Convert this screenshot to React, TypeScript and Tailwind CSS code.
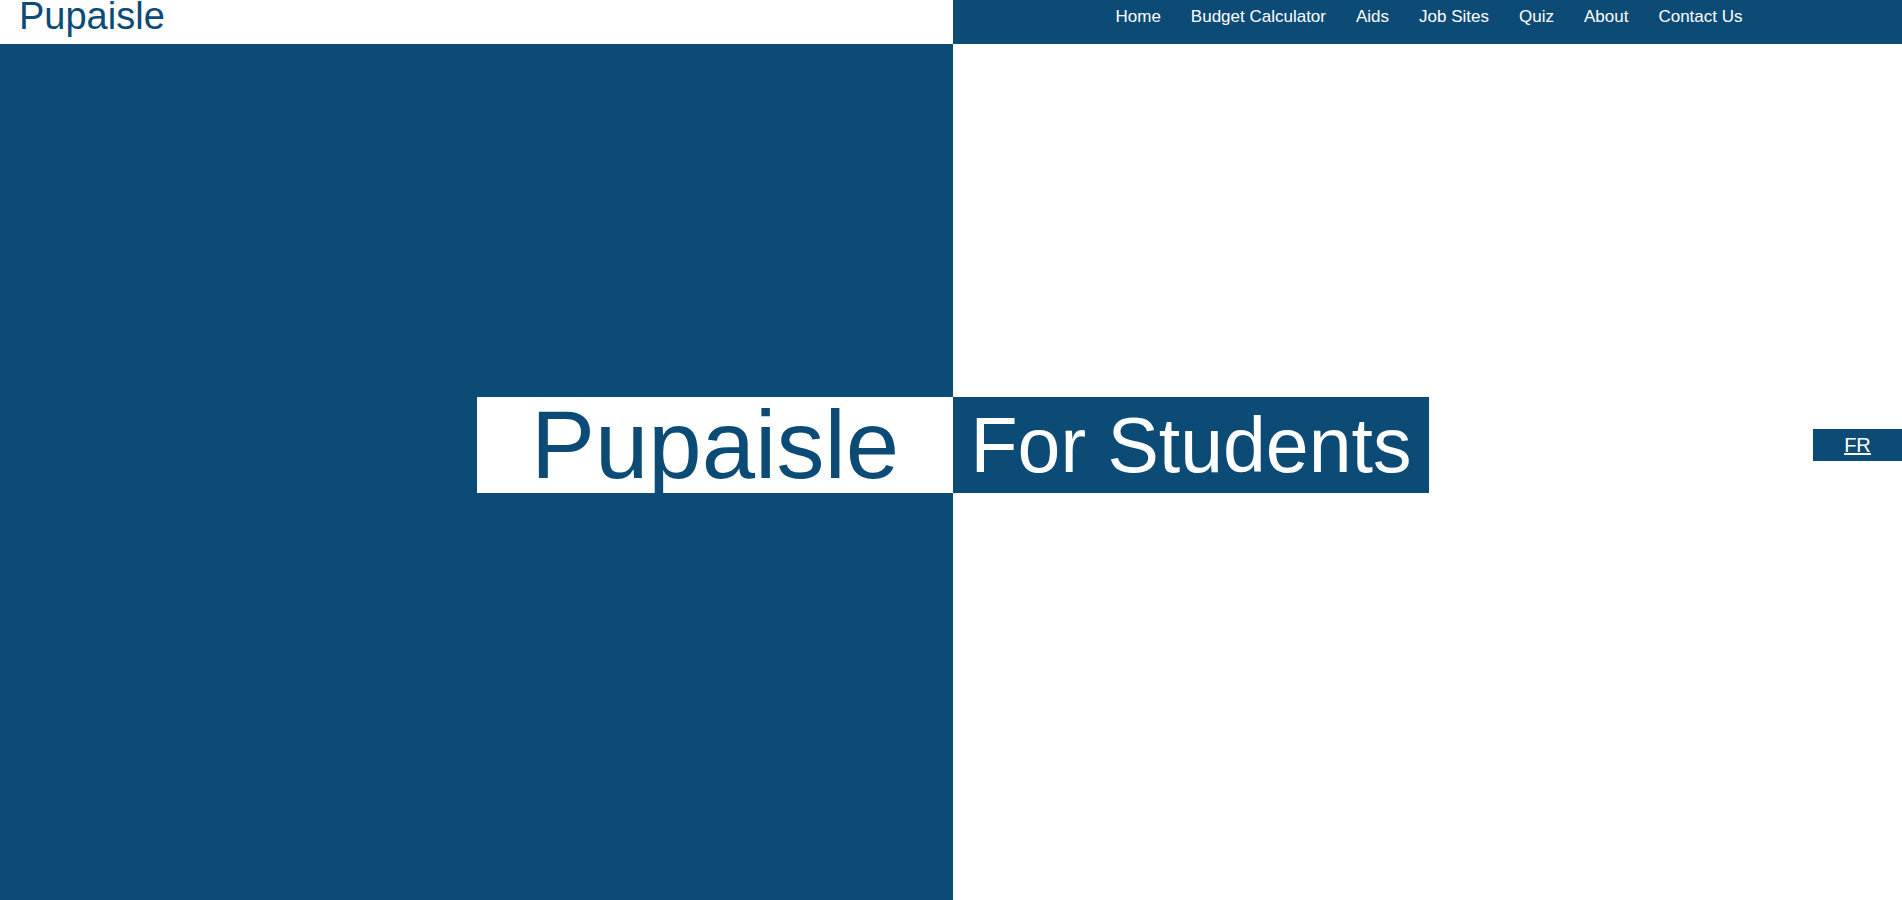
const navLinks = ["Home", "Budget Calculator", "Aids", "Job Sites", "Quiz", "About", "Contact Us"];

export default function App() {
  return (
    <div className="min-h-screen flex flex-col font-['Liberation_Sans',Arial,sans-serif]">
      <header className="flex h-[44px]">
        <div className="w-[953px] bg-white pl-[19px]">
          <a href="#" className="block text-[38px] leading-[32px] text-[#0c4b76]">
            Pupaisle
          </a>
        </div>
        <nav className="flex-1 flex justify-center bg-[#0c4b76] pt-[8px] pl-[3px]">
          {navLinks.map((link) => (
            <a key={link} href="#" className="px-[15px] text-[17px] leading-none text-white">
              {link}
            </a>
          ))}
        </nav>
      </header>

      <main className="flex-1 flex flex-col bg-[linear-gradient(to_right,#0c4b76_953px,#ffffff_953px)] pt-[353px]">
        <div className="flex items-center h-[96px]">
          <div className="w-[477px]" />
          <div className="w-[476px] h-full flex items-center justify-center bg-white text-[96px] leading-none text-[#0c4b76]">
            Pupaisle
          </div>
          <div className="w-[476px] h-full flex items-center justify-center bg-[#0c4b76] text-[77px] leading-none text-white">
            For Students
          </div>
          <div className="flex-1 flex justify-end">
            <a
              href="#"
              className="w-[89px] h-[32px] flex items-center justify-center bg-[#0c4b76] text-[20px] leading-none text-white underline"
            >
              FR
            </a>
          </div>
        </div>
      </main>
    </div>
  );
}
